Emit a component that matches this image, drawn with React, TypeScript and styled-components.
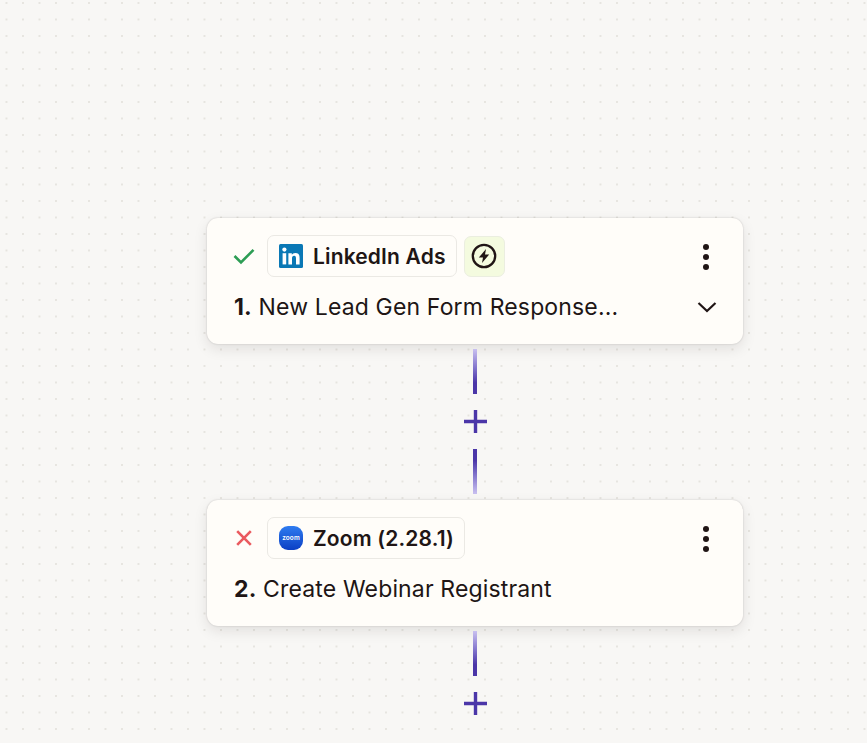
import React from 'react';
import styled, { createGlobalStyle } from 'styled-components';

const GlobalStyle = createGlobalStyle`
  html, body {
    margin: 0;
    padding: 0;
    height: 100%;
    overflow: hidden;
  }
  body {
    font-family: Inter, "Liberation Sans", sans-serif;
    color: #201515;
  }
`;

const Canvas = styled.div`
  width: 867px;
  height: 743px;
  overflow: hidden;
  box-sizing: border-box;
  padding: 218px 0 0 207px;
  display: flex;
  flex-direction: column;
  align-items: flex-start;
  background-color: #f8f7f5;
  background-image: radial-gradient(circle at 1.2px 1.2px, #e6e4df 1px, transparent 1.2px);
  background-size: 16.5px 16.5px;
  background-position: 5.5px 2px;
`;

const Card = styled.div`
  width: 536px;
  height: 126px;
  box-sizing: border-box;
  padding: 17px 24px 0 26px;
  background: #fffdf9;
  border-radius: 11px;
  box-shadow: 0 0 2px rgba(32, 21, 21, 0.2), 0 5px 14px rgba(32, 21, 21, 0.1);
  display: flex;
  flex-direction: column;
  gap: 15px;
`;

const TopRow = styled.div`
  display: flex;
  align-items: center;
  height: 42px;
`;

const StatusBox = styled.div`
  width: 22px;
  display: flex;
  justify-content: center;
  margin-right: 12px;
`;

const AppChip = styled.div`
  height: 42px;
  box-sizing: border-box;
  padding: 0 10px 0 11px;
  display: flex;
  align-items: center;
  gap: 10px;
  border: 1px solid #ebe9e4;
  border-radius: 7px;
  font-size: 21px;
  font-weight: 600;
  letter-spacing: 0.15px;
`;

const TriggerChip = styled.div`
  width: 41px;
  height: 41px;
  margin-left: 7px;
  display: flex;
  align-items: center;
  justify-content: center;
  background: #f4fbdf;
  border: 1px solid #ebeee0;
  border-radius: 7px;
  box-sizing: border-box;
`;

const MenuButton = styled.div`
  margin-left: auto;
  margin-top: 2px;
  width: 20px;
  display: flex;
  flex-direction: column;
  align-items: center;
  gap: 3.5px;
  margin-right: 3px;
`;

const MenuDot = styled.span`
  width: 6.5px;
  height: 6.5px;
  border-radius: 50%;
  background: #201515;
`;

const TitleRow = styled.div`
  display: flex;
  align-items: center;
  justify-content: space-between;
  font-size: 23px;
  line-height: 30px;
  padding-left: 1px;
`;

const Title = styled.div`
  font-weight: 400;
  white-space: pre;
  letter-spacing: 0.15px;
`;

const StepNumber = styled.span`
  font-weight: 700;
`;

const Chevron = styled.svg`
  margin-right: 2px;
`;

const Connector = styled.div<{ $bottom?: number }>`
  width: 536px;
  display: flex;
  flex-direction: column;
  align-items: center;
  padding-bottom: ${p => p.$bottom ?? 0}px;
`;

const Line = styled.div<{ $flip?: boolean; $top: number }>`
  width: 4px;
  height: 45px;
  margin-top: ${p => p.$top}px;
  background: linear-gradient(
    ${p => (p.$flip ? '0deg' : '180deg')},
    #c9c0f0 0%,
    #7d6fc9 45%,
    #4b36a8 75%,
    #4b36a8 100%
  );
`;

const PlusIcon = styled.svg`
  display: block;
  margin-top: 16px;
`;

const CheckIcon = () => (
  <svg width="22" height="18" viewBox="0 0 22 18">
    <path d="M1.5 9 L8 15.5 L20.5 2.8" fill="none" stroke="#2d9d55" strokeWidth="2.6" />
  </svg>
);

const CrossIcon = () => (
  <svg width="18" height="18" viewBox="0 0 18 18">
    <path d="M2.2 2.2 L15.8 15.8 M15.8 2.2 L2.2 15.8" fill="none" stroke="#ea5a5f" strokeWidth="2.6" />
  </svg>
);

const LinkedInIcon = () => (
  <svg width="24" height="24" viewBox="0 0 24 24">
    <rect width="24" height="24" rx="1.5" fill="#0a78b5" />
    <rect x="3.6" y="9.2" width="3.6" height="11.2" fill="#fff" />
    <circle cx="5.4" cy="5.6" r="2.1" fill="#fff" />
    <path
      d="M9.4 9.2h3.4v1.6c.6-1 1.8-1.9 3.6-1.9 3.4 0 4.2 2.2 4.2 5.1v6.4h-3.6v-5.7c0-1.4-.1-3-1.9-3s-2.1 1.4-2.1 2.9v5.8H9.4z"
      fill="#fff"
    />
  </svg>
);

const ZoomIcon = () => (
  <svg width="24" height="24" viewBox="0 0 24 24">
    <defs>
      <linearGradient id="zoomFill" x1="0" y1="0" x2="0" y2="1">
        <stop offset="0" stopColor="#2f7cf0" />
        <stop offset="1" stopColor="#0b3fc4" />
      </linearGradient>
    </defs>
    <rect width="24" height="24" rx="9" fill="url(#zoomFill)" />
    <text x="12" y="14" textAnchor="middle" fontSize="6.4" fontWeight="600" fill="#fff" fontFamily="Inter, sans-serif">
      zoom
    </text>
  </svg>
);

const BoltIcon = () => (
  <svg width="26" height="26" viewBox="0 0 26 26">
    <circle cx="13" cy="13" r="11.2" fill="none" stroke="#201515" strokeWidth="2.3" />
    <path d="M15 6 L7.8 14.6 H12 L11 20 L18.2 11.4 H14 Z" fill="#201515" />
  </svg>
);

const Plus = () => (
  <PlusIcon width="23" height="23" viewBox="0 0 23 23">
    <path d="M11.5 0 V23 M0 11.5 H23" fill="none" stroke="#4b36a8" strokeWidth="3.4" />
  </PlusIcon>
);

const Menu = () => (
  <MenuButton>
    <MenuDot />
    <MenuDot />
    <MenuDot />
  </MenuButton>
);

export default function App() {
  return (
    <>
      <GlobalStyle />
      <Canvas>
        <Card>
          <TopRow>
            <StatusBox>
              <CheckIcon />
            </StatusBox>
            <AppChip>
              <LinkedInIcon />
              LinkedIn Ads
            </AppChip>
            <TriggerChip>
              <BoltIcon />
            </TriggerChip>
            <Menu />
          </TopRow>
          <TitleRow>
            <Title>
              <StepNumber>1.</StepNumber> New Lead Gen Form Response...
            </Title>
            <Chevron width="20" height="12" viewBox="0 0 20 12">
              <path d="M1.5 2 L10 10 L18.5 2" fill="none" stroke="#201515" strokeWidth="2.2" />
            </Chevron>
          </TitleRow>
        </Card>
        <Connector $bottom={6}>
          <Line $top={5} />
          <Plus />
          <Line $top={16} $flip />
        </Connector>
        <Card>
          <TopRow>
            <StatusBox>
              <CrossIcon />
            </StatusBox>
            <AppChip>
              <ZoomIcon />
              Zoom (2.28.1)
            </AppChip>
            <Menu />
          </TopRow>
          <TitleRow>
            <Title>
              <StepNumber>2.</StepNumber> Create Webinar Registrant
            </Title>
          </TitleRow>
        </Card>
        <Connector>
          <Line $top={5} />
          <Plus />
        </Connector>
      </Canvas>
    </>
  );
}
